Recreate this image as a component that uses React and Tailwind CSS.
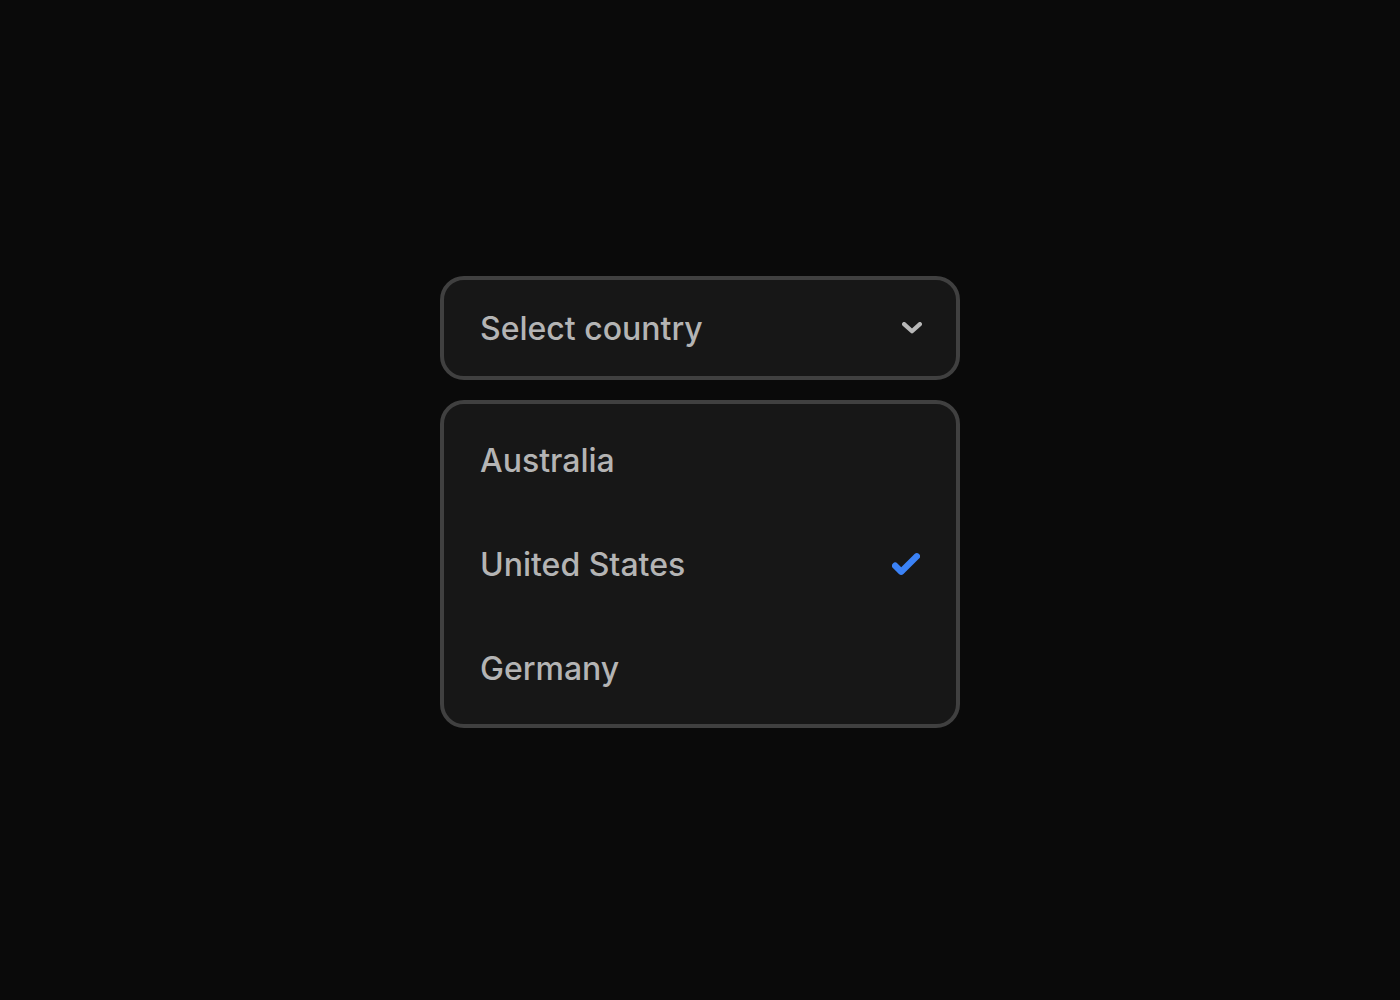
import { useState } from "react";

const countries = ["Australia", "United States", "Germany"];

function ChevronIcon() {
  return (
    <svg className="h-3.5 w-5" viewBox="0 0 20 14" fill="none" stroke="#b8b8b8" strokeWidth="4.2" strokeLinecap="round" strokeLinejoin="round" aria-hidden="true">
      <path d="M2.1 2.1l7.9 7.2L17.9 2.1" />
    </svg>
  );
}

function CheckIcon() {
  return (
    <svg className="h-[26px] w-7" viewBox="0 0 28 26" fill="none" stroke="#3b82f6" strokeWidth="6.4" strokeLinecap="round" strokeLinejoin="round" aria-hidden="true">
      <path d="M3.2 13.7l6 6L24.8 4.3" />
    </svg>
  );
}

export default function App() {
  const [selected, setSelected] = useState("United States");
  return (
    <main className="flex min-h-screen items-center justify-center bg-[#0a0a0a] px-4 pt-1 font-['Inter',sans-serif] text-[32px] leading-10 font-medium text-[#b4b4b4]">
      <div className="flex w-full max-w-[520px] flex-col gap-5">
        <button type="button" aria-haspopup="listbox" aria-expanded="true" className="flex w-full items-center justify-between rounded-3xl border-4 border-[#404040] bg-[#171717] pt-[29px] pr-[34px] pb-[27px] pl-9 text-left">
          Select country
          <ChevronIcon />
        </button>
        <div role="listbox" aria-label="Country" className="rounded-3xl border-4 border-[#404040] bg-[#171717] py-1">
          {countries.map((country) => (
            <button key={country} type="button" role="option" aria-selected={country === selected} onClick={() => setSelected(country)} className="flex w-full items-center justify-between px-9 pt-[33px] pb-[31px] text-left">
              {country}
              {country === selected && <CheckIcon />}
            </button>
          ))}
        </div>
      </div>
    </main>
  );
}
